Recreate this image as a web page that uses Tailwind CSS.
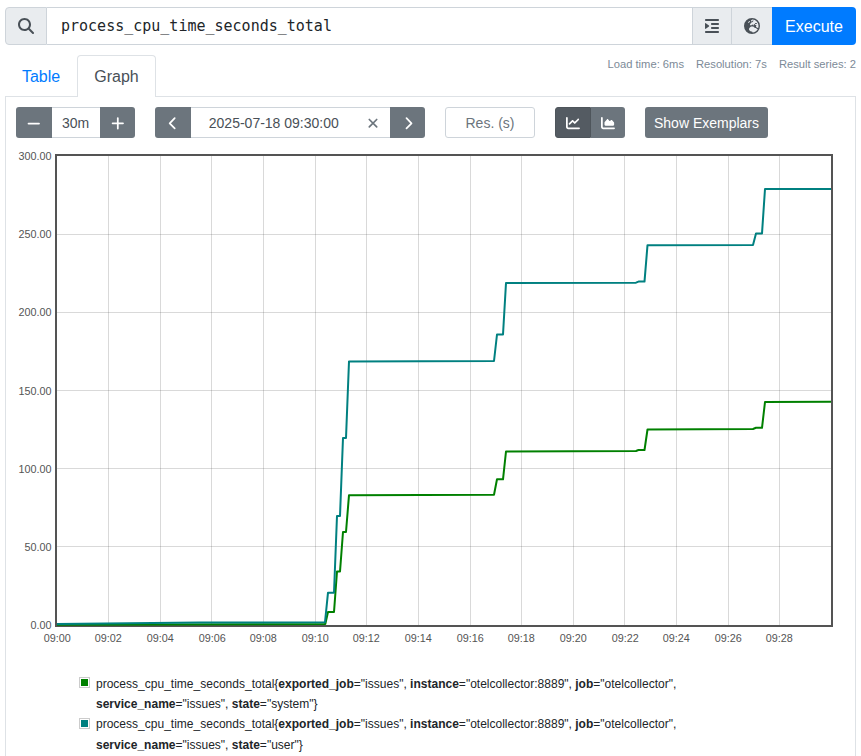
<!DOCTYPE html>
<html lang="en">
<head>
<meta charset="utf-8">
<title>Prometheus</title>
<script src="https://cdn.jsdelivr.net/npm/@tailwindcss/browser@4"></script>
</head>
<body class="h-[756px] overflow-hidden bg-white font-['Liberation_Sans',Arial,sans-serif] text-[#212529]">
<main class="flex h-full flex-col pl-[5px] pr-[5px] pt-[7px]">
  <div class="flex h-[38px] shrink-0">
    <span class="flex w-[42px] items-center justify-center rounded-l border border-[#ced4da] bg-[#e9ecef] text-[#495057]">
      <svg class="size-4" viewBox="0 0 512 512" fill="currentColor"><path d="M416 208c0 45.900-14.900 88.300-40 122.700L502.600 457.400c12.500 12.500 12.500 32.800 0 45.300s-32.800 12.500-45.300 0L330.700 376c-34.400 25.200-76.800 40-122.700 40C93.100 416 0 322.900 0 208S93.100 0 208 0S416 93.100 416 208zM208 352a144 144 0 1 0 0-288 144 144 0 1 0 0 288z"/></svg>
    </span>
    <div class="flex flex-1 items-center border-y border-[#ced4da] pl-[14px] pt-px font-['DejaVu_Sans_Mono',monospace] text-[15px]">process_cpu_time_seconds_total</div>
    <span class="flex w-[40px] items-center justify-center border border-[#ced4da] bg-[#e9ecef] text-[#495057]">
      <svg class="h-4 w-[14px]" viewBox="0 0 448 512" fill="currentColor"><path d="M0 64C0 46.300 14.300 32 32 32H416c17.700 0 32 14.300 32 32s-14.300 32-32 32H32C14.300 96 0 81.700 0 64zM192 192c0-17.700 14.300-32 32-32H416c17.700 0 32 14.300 32 32s-14.300 32-32 32H224c-17.700 0-32-14.300-32-32zm32 96H416c17.700 0 32 14.300 32 32s-14.300 32-32 32H224c-17.700 0-32-14.300-32-32s14.300-32 32-32zM0 448c0-17.700 14.300-32 32-32H416c17.700 0 32 14.300 32 32s-14.300 32-32 32H32c-17.700 0-32-14.300-32-32zM127.800 268.600L25.800 347.900C15.300 356.100 0 348.600 0 335.300V176.700c0-13.300 15.300-20.800 25.800-12.600l101.900 79.300c8.200 6.400 8.200 18.900 0 25.300z"/></svg>
    </span>
    <span class="flex w-[40px] items-center justify-center border-y border-[#ced4da] bg-[#e9ecef] text-[#495057]">
      <svg class="size-4" viewBox="0 0 512 512" fill="currentColor"><path d="M266.300 48.300L232.500 73.600c-5.400 4-8.500 10.400-8.500 17.100v9.100c0 6.800 5.500 12.300 12.300 12.300c2.400 0 4.800-.7 6.800-2.100l41.800-27.900c2-1.300 4.400-2.100 6.800-2.100h1c6.200 0 11.300 5.100 11.300 11.300c0 3-1.200 5.900-3.300 8l-19.900 19.900c-5.800 5.800-12.900 10.200-20.700 12.800l-26.500 8.800c-5.800 1.900-9.600 7.300-9.600 13.400c0 3.700-1.500 7.300-4.100 10l-17.900 17.900c-6.400 6.400-9.900 15-9.900 24v4.300c0 16.400 13.600 29.700 29.900 29.700c11 0 21.200-6.200 26.100-16l4-8.100c2.400-4.800 7.400-7.900 12.800-7.900c4.500 0 8.700 2.100 11.400 5.700l16.300 21.700c2.100 2.900 5.500 4.500 9.100 4.500c8.400 0 13.900-8.900 10.100-16.400l-1.100-2.300c-3.500-7 0-15.500 7.500-18l21.200-7.100c7.600-2.500 12.700-9.600 12.700-17.600c0-10.300 8.300-18.600 18.600-18.600H400c8.800 0 16 7.200 16 16s-7.200 16-16 16H379.300c-7.200 0-14.200 2.900-19.300 8l-4.700 4.700c-2.100 2.100-3.300 5-3.300 8c0 6.200 5.100 11.300 11.300 11.300h11.300c6 0 11.800 2.400 16 6.600l6.500 6.500c1.800 1.800 2.800 4.300 2.800 6.800s-1 5-2.800 6.800l-7.500 7.500C386 262 384 266.900 384 272s2 10 5.700 13.700L408 304c10.200 10.200 24.100 16 38.600 16H454c6.500-20.200 10-41.700 10-64c0-111.400-87.600-202.400-197.700-207.700zm172 307.900c-3.700-2.600-8.200-4.100-13-4.100c-6 0-11.800-2.400-16-6.600L396 332c-7.700-7.700-18-12-28.900-12c-9.700 0-19.200-3.500-26.600-9.800L314 287.400c-11.600-9.900-26.400-15.400-41.700-15.400H251.400c-12.600 0-25 3.700-35.500 10.700L188.500 301c-17.800 11.900-28.500 31.900-28.500 53.300v3.200c0 17 6.700 33.300 18.700 45.300l16 16c8.500 8.500 20 13.300 32 13.300H248c13.300 0 24 10.700 24 24c0 2.500 .4 5 1.100 7.300c71.300-5.800 132.500-47.600 165.200-107.200zM0 256a256 256 0 1 1 512 0A256 256 0 1 1 0 256zM187.300 100.700c-6.200-6.200-16.400-6.200-22.600 0l-32 32c-6.200 6.200-6.200 16.400 0 22.600s16.400 6.200 22.600 0l32-32c6.200-6.200 6.200-16.400 0-22.600z"/></svg>
    </span>
    <button class="w-[84px] rounded-r bg-[#007bff] pt-[2px] text-base text-white">Execute</button>
  </div>

  <div class="mt-[10px] flex h-[42px] shrink-0 items-stretch">
    <a class="flex w-[72px] items-center justify-center border-b border-[#dee2e6] pt-[2px] text-base text-[#007bff]">Table</a>
    <a class="flex w-[79px] items-center justify-center rounded-t border border-b-0 border-[#dee2e6] pt-px text-base text-[#495057]">Graph</a>
    <div class="flex flex-1 justify-end gap-3 border-b border-[#dee2e6] pt-[2px] text-[11.200px] leading-[15px] text-[#7c8a97]">
      <span>Load time: 6ms</span><span>Resolution: 7s</span><span>Result series: 2</span>
    </div>
  </div>

  <section class="flex min-h-0 flex-1 flex-col border-x border-[#dee2e6]">
    <div class="ml-[10px] mt-[10px] flex h-[31px] shrink-0 gap-5 text-sm text-[#495057]">
      <div class="flex w-[119px]">
        <button class="flex w-[36px] items-center justify-center rounded-l-[3px] bg-[#6c757d] text-white"><svg class="size-[14px]" viewBox="0 0 14 14" fill="none" stroke="currentColor" stroke-width="1.750" stroke-linecap="round"><path d="M1.500 7.500h10.500"/></svg></button>
        <div class="flex flex-1 items-center justify-center border-y border-[#ced4da] pr-px">30m</div>
        <button class="flex w-[35px] items-center justify-center rounded-r-[3px] bg-[#6c757d] text-white"><svg class="size-[14px]" viewBox="0 0 14 14" fill="none" stroke="currentColor" stroke-width="1.750" stroke-linecap="round"><path d="M6.800 2v10.500M1.600 7.300h10.400"/></svg></button>
      </div>
      <div class="flex w-[270px]">
        <button class="flex w-[36px] items-center justify-center rounded-l-[3px] bg-[#6c757d] text-white"><svg class="size-[14px]" viewBox="0 0 14 14" fill="none" stroke="currentColor" stroke-width="1.750" stroke-linecap="round" stroke-linejoin="round"><path d="M8.700 2.200 3.700 7.300 8.700 12.400"/></svg></button>
        <div class="flex flex-1 items-center border-y border-[#ced4da] pl-[17.800px]">2025-07-18 09:30:00<svg class="ml-[28px] size-[12px]" viewBox="0 0 12 12" fill="none" stroke="#6c757d" stroke-width="1.700" stroke-linecap="round"><path d="m2.300 2.500 7.400 7.400M9.700 2.500l-7.400 7.400"/></svg></div>
        <button class="flex w-[35px] items-center justify-center rounded-r-[3px] bg-[#6c757d] text-white"><svg class="size-[14px]" viewBox="0 0 14 14" fill="none" stroke="currentColor" stroke-width="1.750" stroke-linecap="round" stroke-linejoin="round"><path d="M5.500 2.200 10.500 7.300 5.500 12.400"/></svg></button>
      </div>
      <div class="flex w-[90px] items-center justify-center rounded-[3px] border border-[#ced4da] text-[#6c757d]">Res. (s)</div>
      <div class="flex w-[70px] text-white">
        <button class="flex w-[36px] items-center justify-center rounded-l-[3px] border border-[#4e555b] bg-[#545b62]"><svg class="size-[14px]" viewBox="0 0 512 512" fill="currentColor"><path d="M64 64c0-17.700-14.300-32-32-32S0 46.300 0 64V400c0 44.200 35.800 80 80 80H480c17.700 0 32-14.300 32-32s-14.300-32-32-32H80c-8.800 0-16-7.200-16-16V64zm406.600 86.600c12.500-12.500 12.500-32.800 0-45.300s-32.800-12.500-45.300 0L320 210.700l-57.400-57.400c-12.500-12.500-32.800-12.500-45.300 0l-112 112c-12.500 12.500-12.500 32.800 0 45.300s32.800 12.500 45.300 0L240 221.300l57.400 57.400c12.500 12.500 32.800 12.500 45.300 0l128-128z"/></svg></button>
        <button class="flex w-[34px] items-center justify-center rounded-r-[3px] bg-[#6c757d]"><svg class="size-[14px]" viewBox="0 0 512 512" fill="currentColor"><path d="M64 64c0-17.700-14.300-32-32-32S0 46.300 0 64V400c0 44.200 35.800 80 80 80H480c17.700 0 32-14.300 32-32s-14.300-32-32-32H80c-8.800 0-16-7.200-16-16V64zm96 288H448c17.700 0 32-14.300 32-32V251.800c0-7.600-2.700-15-7.700-20.800l-65.800-76.800c-12.100-14.200-33.700-15-46.900-1.800l-21 21c-10 10-26.400 9.200-35.400-1.600l-39.200-47c-12.600-15.100-35.700-15.400-48.700-.6L135.900 215c-5.100 5.800-7.900 13.300-7.900 21.100v84c0 17.700 14.300 32 32 32z"/></svg></button>
      </div>
      <button class="w-[123px] rounded-[3px] bg-[#6c757d] text-white">Show Exemplars</button>
    </div>

    <svg class="mt-[10px] h-[504px] w-[849px] shrink-0" viewBox="6 148 849 504" font-size="10.800">
      <path d="M108.500 155v471M160.500 155v471M211.500 155v471M263.500 155v471M315.500 155v471M366.500 155v471M418.500 155v471M470.500 155v471M521.500 155v471M573.500 155v471M624.500 155v471M676.500 155v471M728.500 155v471M779.500 155v471M56 234.500h776M56 312.500h776M56 390.500h776M56 468.500h776M56 546.500h776" stroke="#545454" stroke-opacity=".22" fill="none"/>
      <rect x="56" y="155" width="776" height="471" fill="none" stroke="#545454" stroke-width="2"/>
      <g fill="none" stroke-width="2" stroke-linejoin="round">
        <path stroke="#008000" d="M57 624.800 325.300 624 328 612H334L337 571.500H340L343 532H346L349 495.200 494 494.700 497 479.300H503L506 451.500 636 451 638.500 450H644.500L647.500 429.500 753 429 756 427.800H762L765 402 831 401.800"/>
        <path stroke="#008080" d="M57 624 200 622.600 325 622.200 328 592.700H334L337 516H340L343 438H346L349 361.500 494 361 497 334.500H503L506 283 636 282.700 638.500 281.600H644.500L647.500 245.200 753 245 756 233.400H762L765 189H831"/>
      </g>
      <g fill="#545454" text-anchor="end">
        <text x="51.500" y="160">300.00</text><text x="51.500" y="238">250.00</text><text x="51.500" y="316">200.00</text><text x="51.500" y="395">150.00</text><text x="51.500" y="473">100.00</text><text x="51.500" y="551">50.00</text><text x="51.500" y="629">0.00</text>
      </g>
      <g fill="#545454" text-anchor="middle">
        <text x="57.300" y="642">09:00</text><text x="108.300" y="642">09:02</text><text x="160.300" y="642">09:04</text><text x="212.300" y="642">09:06</text><text x="263.300" y="642">09:08</text><text x="315.300" y="642">09:10</text><text x="366.300" y="642">09:12</text><text x="418.300" y="642">09:14</text><text x="470.300" y="642">09:16</text><text x="521.300" y="642">09:18</text><text x="573.300" y="642">09:20</text><text x="625.300" y="642">09:22</text><text x="676.300" y="642">09:24</text><text x="728.300" y="642">09:26</text><text x="779.300" y="642">09:28</text>
      </g>
    </svg>

    <div class="ml-[73px] mt-[22px] text-[12.020px] leading-[20.200px]">
      <div class="flex gap-[6px]">
        <span class="mt-[3px] size-[11px] shrink-0 border border-[#ccc] p-px"><span class="block size-full bg-[#008000]"></span></span>
        <p>process_cpu_time_seconds_total{<b>exported_job</b>="issues", <b>instance</b>="otelcollector:8889", <b>job</b>="otelcollector",<br><b>service_name</b>="issues", <b>state</b>="system"}</p>
      </div>
      <div class="flex gap-[6px]">
        <span class="mt-[4px] size-[11px] shrink-0 border border-[#ccc] p-px"><span class="block size-full bg-[#008080]"></span></span>
        <p>process_cpu_time_seconds_total{<b>exported_job</b>="issues", <b>instance</b>="otelcollector:8889", <b>job</b>="otelcollector",<br><b>service_name</b>="issues", <b>state</b>="user"}</p>
      </div>
    </div>
  </section>
</main>
</body>
</html>
